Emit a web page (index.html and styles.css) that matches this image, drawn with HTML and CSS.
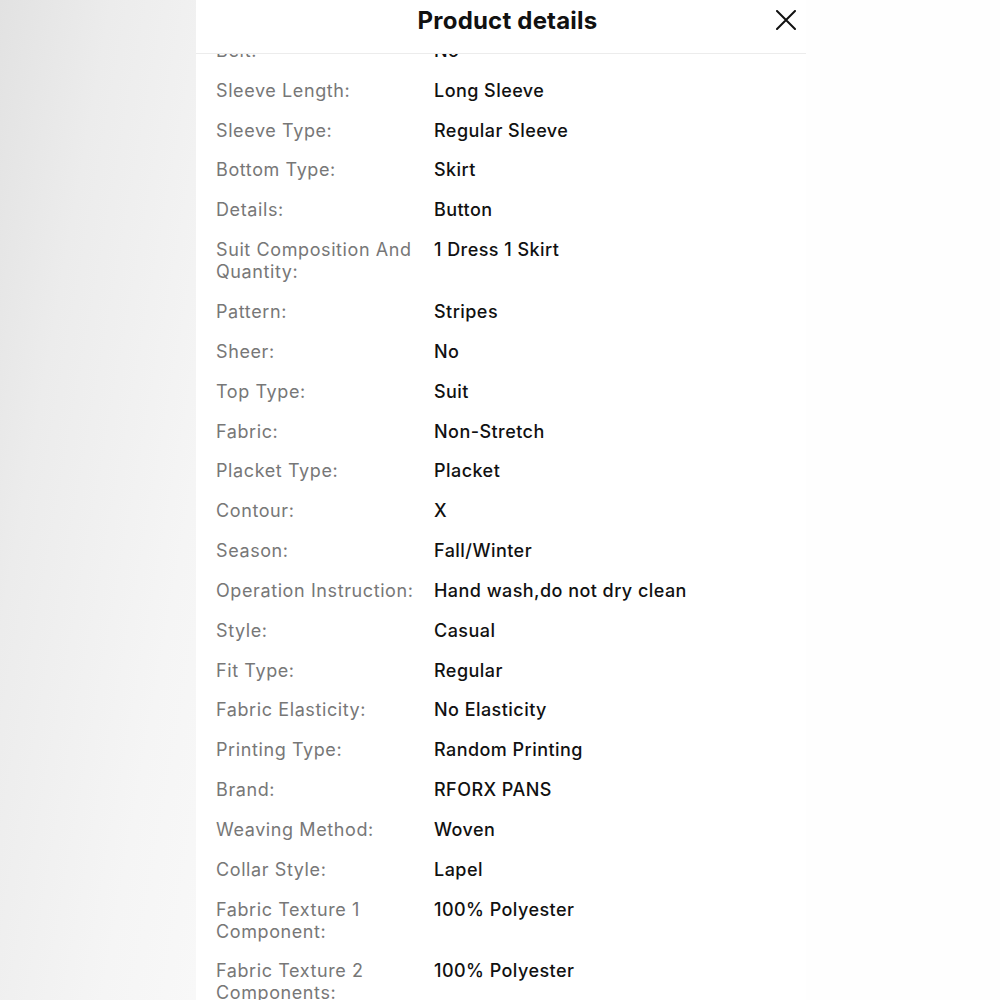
FILE: index.html
```html
<!DOCTYPE html>
<html>
<head>
<meta charset="utf-8">
<link rel="stylesheet" href="styles.css">
</head>
<body>
<div class="stage">
  <div class="backdrop-left"></div>
  <div class="sheet">
    <div class="edge-mark"></div>
    <header class="sheet-head">
      <h1 class="sheet-title">Product details</h1>
      <button class="close-btn" aria-label="Close">
        <svg width="20" height="20" viewBox="0 0 20 20"><path d="M1 1 L19 19 M19 1 L1 19" stroke="#111" stroke-width="2" stroke-linecap="round" fill="none"/></svg>
      </button>
    </header>
    <div class="viewport">
      <dl class="attrs">
        <div class="row"><dt>Belt:</dt><dd>No</dd></div>
        <div class="row"><dt>Sleeve Length:</dt><dd>Long Sleeve</dd></div>
        <div class="row"><dt>Sleeve Type:</dt><dd>Regular Sleeve</dd></div>
        <div class="row"><dt>Bottom Type:</dt><dd>Skirt</dd></div>
        <div class="row"><dt>Details:</dt><dd>Button</dd></div>
        <div class="row"><dt>Suit Composition And Quantity:</dt><dd>1 Dress 1 Skirt</dd></div>
        <div class="row"><dt>Pattern:</dt><dd>Stripes</dd></div>
        <div class="row"><dt>Sheer:</dt><dd>No</dd></div>
        <div class="row"><dt>Top Type:</dt><dd>Suit</dd></div>
        <div class="row"><dt>Fabric:</dt><dd>Non-Stretch</dd></div>
        <div class="row"><dt>Placket Type:</dt><dd>Placket</dd></div>
        <div class="row"><dt>Contour:</dt><dd>X</dd></div>
        <div class="row"><dt>Season:</dt><dd>Fall/Winter</dd></div>
        <div class="row"><dt>Operation Instruction:</dt><dd>Hand wash,do not dry clean</dd></div>
        <div class="row"><dt>Style:</dt><dd>Casual</dd></div>
        <div class="row"><dt>Fit Type:</dt><dd>Regular</dd></div>
        <div class="row"><dt>Fabric Elasticity:</dt><dd>No Elasticity</dd></div>
        <div class="row"><dt>Printing Type:</dt><dd>Random Printing</dd></div>
        <div class="row"><dt>Brand:</dt><dd>RFORX PANS</dd></div>
        <div class="row"><dt>Weaving Method:</dt><dd>Woven</dd></div>
        <div class="row"><dt>Collar Style:</dt><dd>Lapel</dd></div>
        <div class="row"><dt>Fabric Texture 1 Component:</dt><dd>100% Polyester</dd></div>
        <div class="row"><dt>Fabric Texture 2 Components:</dt><dd>100% Polyester</dd></div>
        <div class="row"><dt>Composition:</dt><dd>100% Polyester</dd></div>
      </dl>
    </div>
  </div>
  <div class="backdrop-right"></div>
</div>
</body>
</html>
```
FILE: styles.css
```css
html, body {
  margin: 0;
  padding: 0;
  height: 100%;
  overflow: hidden;
  background: #fdfdfd;
}
body {
  font-family: Inter, "Noto Sans", "Liberation Sans", sans-serif;
}
.stage {
  display: flex;
  height: 1000px;
}
.backdrop-left {
  width: 196px;
  flex: none;
  background: linear-gradient(100deg, #e2e2e2 0%, #ececec 30%, #f5f5f5 75%, #f8f8f8 100%);
}
.sheet {
  position: relative;
  width: 610px;
  flex: none;
  background: #fff;
  display: flex;
  flex-direction: column;
  overflow: hidden;
}
.edge-mark {
  position: absolute;
  left: 0;
  top: 0;
  width: 2px;
  height: 8px;
  background: #333;
}
.backdrop-right {
  flex: 1;
  background: #fefefe;
}
.sheet-head {
  height: 53px;
  flex: none;
  display: flex;
  align-items: center;
  padding: 0 9px 0 40px;
  border-bottom: 1px solid #ececec;
  background: #fff;
  position: relative;
  z-index: 1;
}
.sheet-title {
  flex: 1;
  margin: 0;
  text-align: center;
  font-size: 24px;
  font-weight: 700;
  color: #111;
  letter-spacing: 0.2px;
  padding-bottom: 12px;
  padding-left: 4px;
}
.close-btn {
  width: 22px;
  height: 22px;
  padding: 0;
  border: 0;
  background: none;
  display: flex;
  align-items: center;
  justify-content: center;
  margin-bottom: 14px;
}
.viewport {
  flex: 1;
  overflow: hidden;
}
.attrs {
  margin: -23px 0 0;
  padding: 0 0 0 20px;
}
.row {
  display: grid;
  grid-template-columns: 200px 1fr;
  column-gap: 18px;
  padding: 8.93px 0;
  font-size: 18px;
  line-height: 22px;
}
.row dt {
  color: #777;
  font-weight: 430;
  letter-spacing: 0.6px;
}
.row dd {
  margin: 0;
  color: #111;
  font-weight: 500;
  letter-spacing: 0.45px;
}
```
